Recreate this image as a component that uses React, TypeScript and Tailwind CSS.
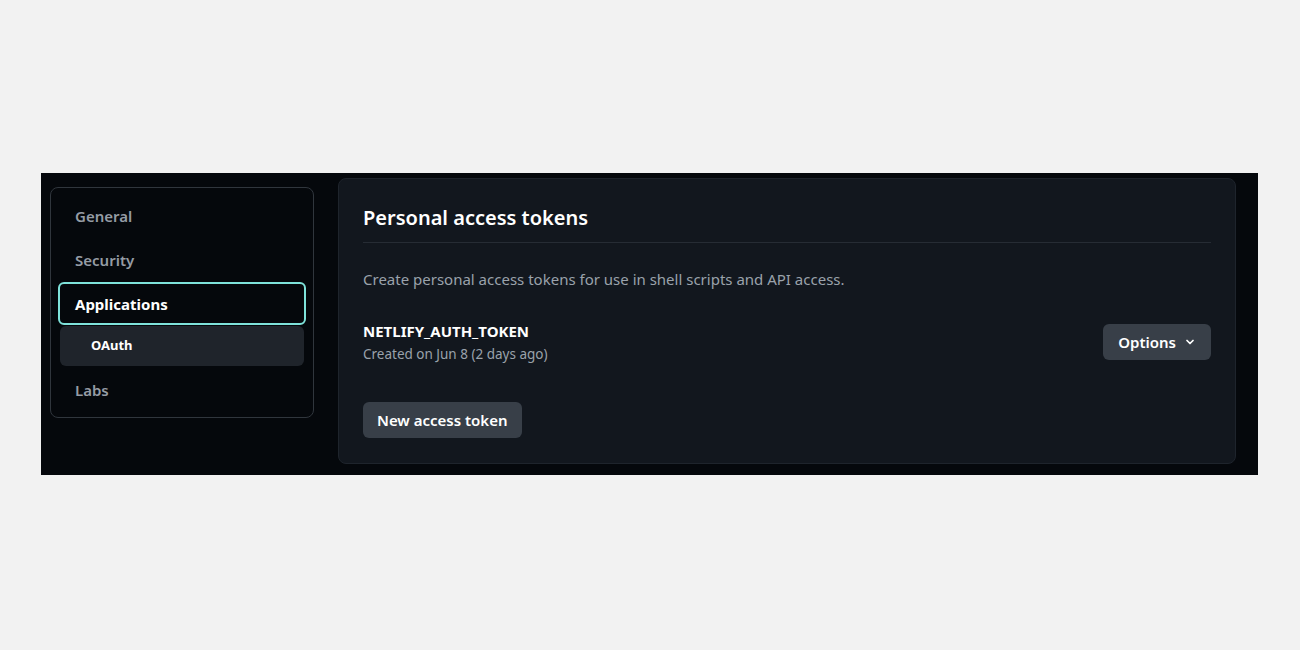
import { ChevronDown } from "lucide-react";

const nav = ["General", "Security"];

export default function App() {
  return (
    <div
      className="flex h-[650px] w-[1300px] items-start bg-[#f2f2f2] pt-[173px] pl-[41px]"
      style={{ fontFamily: '"Noto Sans", "Open Sans", sans-serif' }}
    >
      <div className="flex h-[302px] w-[1217px] items-start bg-[#05080c] pl-[9px] pt-[5px]">
        {/* sidebar */}
        <aside className="mt-[9px] w-[264px] rounded-lg border border-[#30363d] bg-[#05080c] px-[7px] pt-[6px] pb-[3px]">
          {nav.map((item) => (
            <div key={item} className="flex h-[44px] items-center px-[17px] text-[15px] font-semibold text-[#959ca5]">
              {item}
            </div>
          ))}
          <div className="flex h-[43px] items-center rounded-md border-2 border-[#7ee2da] px-[15px] pt-[1px] text-[15px] font-bold text-white">
            Applications
          </div>
          <div className="mx-[2px] mt-[1px] flex h-[40px] items-center rounded-md bg-[#1f242b] pl-[31px] text-[13px] font-bold text-white">
            OAuth
          </div>
          <div className="flex h-[48px] items-center px-[17px] text-[15px] font-semibold text-[#959ca5]">
            Labs
          </div>
        </aside>

        {/* main card */}
        <main className="ml-[24px] h-[286px] w-[898px] rounded-lg border border-[#1e242c] bg-[#12171e] px-[24px] pt-[22px]">
          <h1 className="text-[20px] font-semibold leading-[34px] text-white">Personal access tokens</h1>
          <div className="mt-[7px] border-t border-[#262c34]" />
          <p className="mt-[25px] text-[15px] leading-[22px] text-[#9aa2ab]">
            Create personal access tokens for use in shell scripts and API access.
          </p>
          <div className="mt-[29px] flex items-center justify-between">
            <div>
              <div className="text-[15px] font-bold leading-[24px] text-white">NETLIFY_AUTH_TOKEN</div>
              <div className="text-[13.5px] leading-[22px] text-[#9aa2ab]">Created on Jun 8 (2 days ago)</div>
            </div>
            <button className="flex h-[36px] items-center gap-[8px] rounded-md bg-[#383f48] px-[15px] text-[15px] font-semibold text-white">
              Options
              <ChevronDown size={12} strokeWidth={3.5} />
            </button>
          </div>
          <button className="mt-[37px] h-[36px] rounded-md bg-[#383f48] px-[14px] text-[15px] font-semibold text-white">
            New access token
          </button>
        </main>
      </div>
    </div>
  );
}
